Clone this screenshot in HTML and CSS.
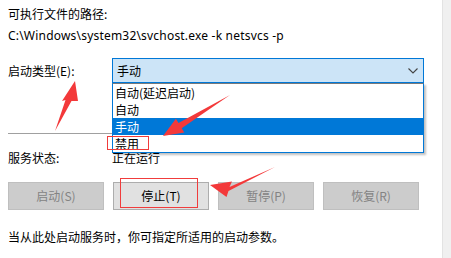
FILE: index.html
```html
<!DOCTYPE html>
<html>
<head>
<meta charset="utf-8">
<link rel="stylesheet" href="styles.css">
</head>
<body>
<div class="page">
  <div class="content">
    <div class="row label-top">可执行文件的路径:</div>
    <div class="row path">C:\Windows\system32\svchost.exe -k netsvcs -p</div>
    <div class="row type-row">
      <div class="lbl">启动类型(E):</div>
      <div class="combo">
        <span>手动</span>
        <svg class="chev" width="10" height="6" viewBox="0 0 10 6"><path d="M0.5 0.5 L5 5 L9.5 0.5" fill="none" stroke="#444" stroke-width="1.1"/></svg>
      </div>
    </div>
    <div class="sep"></div>
    <div class="row status-row">
      <div class="lbl">服务状态:</div>
      <div class="val">正在运行</div>
    </div>
    <div class="buttons">
      <div class="btn disabled">启动(S)</div>
      <div class="btn active">停止(T)</div>
      <div class="btn disabled">暂停(P)</div>
      <div class="btn disabled">恢复(R)</div>
    </div>
    <div class="row hint">当从此处启动服务时，你可指定所适用的启动参数。</div>
  </div>
  <div class="side"></div>

  <div class="dropdown">
    <div class="item">自动(延迟启动)</div>
    <div class="item">自动</div>
    <div class="item sel">手动</div>
    <div class="item">禁用</div>
  </div>
  <div class="mark mark-dis"></div>
  <div class="mark mark-stop"></div>
  <svg class="arrows" width="451" height="258" viewBox="0 0 451 258">
    <polygon fill="#f3393a" points="55,131 65.5,100 62,101 75,81 78,101 71.5,101"/>
    <polygon fill="#f3393a" points="230,95 181.7,128.2 184.3,132.4 163,136 175.9,118.8 178.5,123"/>
    <polygon fill="#f3393a" points="275,167 229.5,187 232,181.5 210,185 226.5,197 228.5,191"/>
  </svg>
</div>
</body>
</html>
```
FILE: styles.css
```css
html, body {
  margin: 0;
  padding: 0;
  background: #ffffff;
}
.page {
  position: relative;
  width: 451px;
  height: 258px;
  overflow: hidden;
  font-family: "Noto Sans CJK SC", "Noto Sans", sans-serif;
  font-size: 12px;
  color: #000;
  display: flex;
}
.content {
  flex: 1;
  padding-left: 8px;
  display: flex;
  flex-direction: column;
}
.side {
  width: 8px;
  background: #f0f0f0;
  border-left: 1px solid #e3e3e3;
}
.row {
  line-height: 16px;
  height: 16px;
}
.label-top {
  margin-top: 6px;
}
.path {
  margin-top: 6px;
  font-family: "Noto Sans", "Noto Sans CJK SC", sans-serif;
  letter-spacing: 0.2px;
}
.type-row {
  display: flex;
  align-items: center;
  height: 25px;
  margin-top: 14px;
}
.lbl {
  width: 104px;
}
.combo {
  width: 301px;
  height: 23px;
  border: 1px solid #0078d7;
  background: #cce4f7;
  display: flex;
  align-items: center;
  justify-content: space-between;
  padding: 0 5px 0 4px;
}
.sep {
  margin-top: 50px;
  height: 1px;
  background: #a0a0a0;
  width: 104px;
}
.status-row {
  display: flex;
  margin-top: 16px;
}
.buttons {
  display: flex;
  margin-top: 16px;
  gap: 9px;
}
.btn {
  width: 94px;
  height: 26px;
  line-height: 26px;
  text-align: center;
  border: 1px solid #bfbfbf;
  background: #cccccc;
  color: #838383;
}
.btn.active {
  background: #e1e1e1;
  border-color: #adadad;
  color: #000;
}
.hint {
  margin-top: 19px;
}
.dropdown {
  position: absolute;
  left: 112px;
  top: 83px;
  width: 310px;
  height: 68px;
  border: 1px solid #0078d7;
  border-top-color: #7a7a7a;
  background: #fff;
  box-shadow: 2px 2px 2px rgba(0,0,0,0.25);
}
.item {
  height: 17px;
  line-height: 17px;
  padding-left: 2px;
}
.item.sel {
  background: #0078d7;
  color: #fff;
}
.mark {
  position: absolute;
  border: 1px solid #f03c3c;
}
.mark-dis {
  left: 107px;
  top: 136px;
  width: 40px;
  height: 12px;
}
.mark-stop {
  left: 120px;
  top: 178px;
  width: 76px;
  height: 28px;
}
.arrows {
  position: absolute;
  left: 0;
  top: 0;
}
```
